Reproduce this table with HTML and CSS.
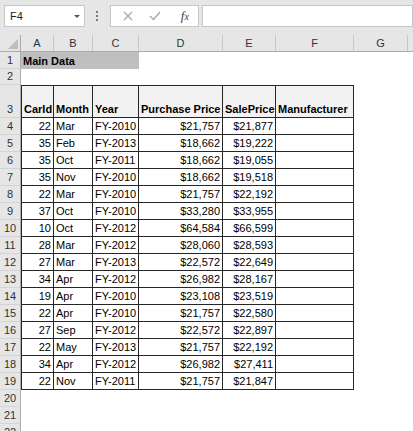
FILE: index.html
```html
<!DOCTYPE html>
<html>
<head>
<meta charset="utf-8">
<link rel="stylesheet" href="styles.css">
</head>
<body>
<div class="app">
  <div class="toolbar">
    <div class="namebox"><span class="ref">F4</span><span class="drop"></span></div>
    <div class="grip"><i></i><i></i><i></i></div>
    <div class="fxbox">
      <svg class="ico" width="10" height="10" viewBox="0 0 10 10"><path d="M1 1 L9 9 M9 1 L1 9" stroke="#a6a6a6" stroke-width="1.2" fill="none"/></svg>
      <svg class="ico" width="12" height="10" viewBox="0 0 12 10"><path d="M1 5 L4.5 8.5 L11 1" stroke="#a6a6a6" stroke-width="1.3" fill="none"/></svg>
      <span class="fx"><i>f</i><span class="x">x</span></span>
    </div>
    <div class="formula"></div>
  </div>

  <div class="sheet">
    <div class="row hdr">
      <div class="corner"><svg width="10" height="10" viewBox="0 0 10 10"><path d="M10 0 L10 10 L0 10 Z" fill="#bdbdbd"/></svg></div>
      <div class="ch">A</div><div class="ch">B</div><div class="ch">C</div><div class="ch">D</div><div class="ch">E</div><div class="ch">F</div><div class="ch">G</div><div class="ch last"></div>
    </div>

    <div class="row">
      <div class="rh">1</div>
      <div class="c title">Main Data</div>
    </div>
    <div class="row r2">
      <div class="rh">2</div>
    </div>
    <div class="row r3">
      <div class="rh">3</div>
      <div class="c t th first">CarId</div>
      <div class="c t th">Month</div>
      <div class="c t th">Year</div>
      <div class="c t th">Purchase Price</div>
      <div class="c t th">SalePrice</div>
      <div class="c t th">Manufacturer</div>
    </div>

    <div class="row"><div class="rh">4</div><div class="c t first num">22</div><div class="c t">Mar</div><div class="c t">FY-2010</div><div class="c t num">$21,757</div><div class="c t num">$21,877</div><div class="c t"></div></div>
    <div class="row"><div class="rh">5</div><div class="c t first num">35</div><div class="c t">Feb</div><div class="c t">FY-2013</div><div class="c t num">$18,662</div><div class="c t num">$19,222</div><div class="c t"></div></div>
    <div class="row"><div class="rh">6</div><div class="c t first num">35</div><div class="c t">Oct</div><div class="c t">FY-2011</div><div class="c t num">$18,662</div><div class="c t num">$19,055</div><div class="c t"></div></div>
    <div class="row"><div class="rh">7</div><div class="c t first num">35</div><div class="c t">Nov</div><div class="c t">FY-2010</div><div class="c t num">$18,662</div><div class="c t num">$19,518</div><div class="c t"></div></div>
    <div class="row"><div class="rh">8</div><div class="c t first num">22</div><div class="c t">Mar</div><div class="c t">FY-2010</div><div class="c t num">$21,757</div><div class="c t num">$22,192</div><div class="c t"></div></div>
    <div class="row"><div class="rh">9</div><div class="c t first num">37</div><div class="c t">Oct</div><div class="c t">FY-2010</div><div class="c t num">$33,280</div><div class="c t num">$33,955</div><div class="c t"></div></div>
    <div class="row"><div class="rh">10</div><div class="c t first num">10</div><div class="c t">Oct</div><div class="c t">FY-2012</div><div class="c t num">$64,584</div><div class="c t num">$66,599</div><div class="c t"></div></div>
    <div class="row"><div class="rh">11</div><div class="c t first num">28</div><div class="c t">Mar</div><div class="c t">FY-2012</div><div class="c t num">$28,060</div><div class="c t num">$28,593</div><div class="c t"></div></div>
    <div class="row"><div class="rh">12</div><div class="c t first num">27</div><div class="c t">Mar</div><div class="c t">FY-2013</div><div class="c t num">$22,572</div><div class="c t num">$22,649</div><div class="c t"></div></div>
    <div class="row"><div class="rh">13</div><div class="c t first num">34</div><div class="c t">Apr</div><div class="c t">FY-2012</div><div class="c t num">$26,982</div><div class="c t num">$28,167</div><div class="c t"></div></div>
    <div class="row"><div class="rh">14</div><div class="c t first num">19</div><div class="c t">Apr</div><div class="c t">FY-2010</div><div class="c t num">$23,108</div><div class="c t num">$23,519</div><div class="c t"></div></div>
    <div class="row"><div class="rh">15</div><div class="c t first num">22</div><div class="c t">Apr</div><div class="c t">FY-2010</div><div class="c t num">$21,757</div><div class="c t num">$22,580</div><div class="c t"></div></div>
    <div class="row"><div class="rh">16</div><div class="c t first num">27</div><div class="c t">Sep</div><div class="c t">FY-2012</div><div class="c t num">$22,572</div><div class="c t num">$22,897</div><div class="c t"></div></div>
    <div class="row"><div class="rh">17</div><div class="c t first num">22</div><div class="c t">May</div><div class="c t">FY-2013</div><div class="c t num">$21,757</div><div class="c t num">$22,192</div><div class="c t"></div></div>
    <div class="row"><div class="rh">18</div><div class="c t first num">34</div><div class="c t">Apr</div><div class="c t">FY-2012</div><div class="c t num">$26,982</div><div class="c t num">$27,411</div><div class="c t"></div></div>
    <div class="row"><div class="rh">19</div><div class="c t first num">22</div><div class="c t">Nov</div><div class="c t">FY-2011</div><div class="c t num">$21,757</div><div class="c t num">$21,847</div><div class="c t"></div></div>
    <div class="row"><div class="rh">20</div></div>
    <div class="row"><div class="rh">21</div></div>
    <div class="row"><div class="rh">22</div></div>
  </div>
</div>
</body>
</html>
```

FILE: styles.css
```css
* { box-sizing: border-box; }
html, body { margin: 0; padding: 0; background: #fff; }
body {
  width: 413px;
  height: 431px;
  overflow: hidden;
  font-family: "Liberation Sans", Arial, sans-serif;
  font-size: 11px;
  color: #000;
}
.app { width: 413px; height: 431px; overflow: hidden; }

.toolbar {
  height: 35px;
  background: #e6e6e6;
  display: flex;
  align-items: flex-start;
  padding-top: 5px;
  padding-left: 4px;
}
.namebox {
  width: 84px;
  height: 22px;
  background: #fff;
  border: 1px solid #c6c6c6;
  display: flex;
  align-items: center;
  justify-content: space-between;
  padding: 0 4px 0 5px;
}
.ref { font-size: 11px; color: #222; }
.drop {
  width: 0; height: 0;
  border-left: 3px solid transparent;
  border-right: 3px solid transparent;
  border-top: 3px solid #555;
}
.grip {
  width: 26px;
  height: 22px;
  display: flex;
  flex-direction: column;
  align-items: center;
  justify-content: center;
  gap: 2px;
}
.grip i { width: 2px; height: 2px; background: #7a7a7a; display: block; }
.fxbox {
  width: 93px;
  height: 22px;
  background: #fff;
  border: 1px solid #c6c6c6;
  display: flex;
  align-items: center;
  padding-left: 12px;
  gap: 16px;
}
.ico { display: block; }
.fx {
  font-family: "Liberation Serif", serif;
  font-size: 13px;
  color: #444;
  margin-left: 4px;
}
.fx .x { font-size: 10px; font-style: italic; }
.formula {
  margin-left: 3px;
  width: 220px;
  height: 22px;
  background: #fff;
  border: 1px solid #c6c6c6;
}

.sheet { display: flex; flex-direction: column; }
.row {
  display: grid;
  grid-template-columns: 21px 33px 39px 46px 84px 53px 78px 54px 5px;
  height: 17px;
}
.r2 { height: 16px; }
.r3 { height: 33px; }

.hdr { background: #e6e6e6; border-bottom: 1px solid #ababab; }
.corner {
  border-right: 1px solid #ababab;
  display: flex;
  align-items: flex-end;
  justify-content: flex-end;
  padding: 0 2px 2px 0;
}
.corner svg { display: block; }
.ch {
  display: flex;
  align-items: center;
  justify-content: center;
  border-right: 1px solid #c8c8c8;
  color: #333;
  font-size: 11px;
}
.ch.last { border-right: none; }

.rh {
  background: #e6e6e6;
  border-right: 1px solid #ababab;
  border-bottom: 1px solid #d4d4d4;
  display: flex;
  align-items: flex-end;
  justify-content: center;
  padding-bottom: 1px;
  color: #333;
  font-size: 11px;
  line-height: 14px;
}

.c {
  display: flex;
  align-items: flex-end;
  padding: 0 2px 1px 2px;
  line-height: 14px;
  white-space: nowrap;
  overflow: hidden;
}
.title {
  grid-column: 2 / span 3;
  background: #bfbfbf;
  font-weight: bold;
}
.t {
  border-right: 1px solid #262626;
  border-bottom: 1px solid #262626;
}
.t.first { border-left: 1px solid #262626; }
.th {
  background: #f2f2f2;
  border-top: 1px solid #262626;
  font-weight: bold;
}
.num { justify-content: flex-end; }
```
